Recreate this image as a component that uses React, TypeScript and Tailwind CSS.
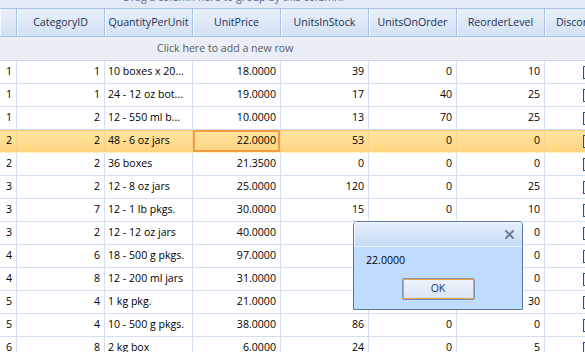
import React from "react";

const cols = ["", "CategoryID", "QuantityPerUnit", "UnitPrice", "UnitsInStock", "UnitsOnOrder", "ReorderLevel", "Discontinued"];

const rows: string[][] = [
  ["1", "1", "10 boxes x 20...", "18.0000", "39", "0", "10"],
  ["1", "1", "24 - 12 oz bot...", "19.0000", "17", "40", "25"],
  ["1", "2", "12 - 550 ml b...", "10.0000", "13", "70", "25"],
  ["2", "2", "48 - 6 oz jars", "22.0000", "53", "0", "0"],
  ["2", "2", "36 boxes", "21.3500", "0", "0", "0"],
  ["3", "2", "12 - 8 oz jars", "25.0000", "120", "0", "25"],
  ["3", "7", "12 - 1 lb pkgs.", "30.0000", "15", "0", "10"],
  ["3", "2", "12 - 12 oz jars", "40.0000", "", "", "0"],
  ["4", "6", "18 - 500 g pkgs.", "97.0000", "", "", "0"],
  ["4", "8", "12 - 200 ml jars", "31.0000", "", "", "0"],
  ["5", "4", "1 kg pkg.", "21.0000", "", "", "30"],
  ["5", "4", "10 - 500 g pkgs.", "38.0000", "86", "0", "0"],
  ["6", "8", "2 kg box", "6.0000", "24", "0", "5"],
];

const font = { fontFamily: '"Open Sans", "Liberation Sans", sans-serif' };

export default function App() {
  return (
    <div className="relative w-[585px] h-[352px] overflow-hidden bg-white text-[10.6px]" style={font}>
      <div className="w-[633px]">
        {/* group panel */}
        <div className="h-[8px] overflow-hidden bg-[#e3ebf6] flex">
          <div className="pl-[123px] mt-[-9px] leading-[13px] text-[#5a6b82] whitespace-nowrap">
            Drag a column here to group by this column.
          </div>
        </div>
        {/* header */}
        <div className="flex h-[29px] border-y border-[#a6bfe2] bg-linear-to-b from-[#e8f0fb] to-[#d3e1f4]">
          {cols.map((c, i) => (
            <div
              key={i}
              className={`${i === 0 ? "w-[17px]" : "w-[88px]"} shrink-0 h-full border-r border-[#a9c2e4] shadow-[inset_1px_0_0_#f6f9fe] flex items-center justify-center text-[#1b2f4f] whitespace-nowrap overflow-hidden`}
            >
              {c}
            </div>
          ))}
        </div>
        {/* new row */}
        <div className="h-[24px] border-b border-[#c6d7ee] bg-[#e9eef7] flex items-center text-[#5b5b5b]">
          <span className="pl-[157px]">Click here to add a new row</span>
        </div>
        {/* data rows */}
        {rows.map((r, ri) => {
          const sel = ri === 3;
          return (
            <div
              key={ri}
              className={`flex h-[23px] border-b ${
                sel
                  ? "border-[#fff0c2] bg-linear-to-b from-[#fee6a2] to-[#ffd47e] shadow-[inset_0_1px_0_#f6c46c]"
                  : "border-[#d3e0f3] bg-white"
              } text-black`}
            >
              {r.map((v, ci) => {
                const isText = ci === 2;
                const cur = sel && ci === 3;
                return (
                  <div
                    key={ci}
                    className={`${ci === 0 ? "w-[17px]" : "w-[88px]"} shrink-0 h-full border-r ${
                      sel ? "border-[#f3d38f]" : "border-[#d3e0f3]"
                    } flex items-center whitespace-nowrap overflow-hidden ${
                      isText ? "justify-start pl-[3px]" : "justify-end pr-[4px]"
                    } ${cur ? "shadow-[inset_0_0_0_2px_#f59c43]" : ""}`}
                  >
                    {v}
                  </div>
                );
              })}
              <div className="w-[88px] shrink-0 h-full flex items-center justify-center">
                <div className="w-[13px] h-[13px] border border-[#21528f] bg-linear-to-br from-[#e6eef8] to-white" />
              </div>
            </div>
          );
        })}
      </div>

      {/* message box */}
      <div className="absolute left-[353px] top-[221px] w-[170px] h-[89px] border border-[#5a78a6] rounded-t-[4px] bg-[#bfdbfe] overflow-hidden">
        <div className="h-[25px] border-b border-[#e9f1fc] bg-linear-to-b from-[#e6effc] via-[#d6e5f9] to-[#c6daf6] shadow-[inset_1px_1px_0_#f4f8fe] flex items-center justify-end pr-[8px]">
          <svg width="9" height="9" viewBox="0 0 9 9">
            <path d="M1 1 L8 8 M8 1 L1 8" stroke="#6b7484" strokeWidth="1.8" strokeLinecap="round" />
          </svg>
        </div>
        <div className="pl-[12px] pt-[5px] h-[22px] leading-[17px] text-black">22.0000</div>
        <div className="flex justify-center mt-[9px]">
          <div className="w-[73px] h-[22px] border border-[#7f93b2] rounded-[2px]">
            <div className="w-full h-full border border-[#f3a144] bg-linear-to-b from-[#eef4fc] to-[#d9e5f5] flex items-center justify-center text-[#1e3a64]">
              OK
            </div>
          </div>
        </div>
      </div>
    </div>
  );
}
